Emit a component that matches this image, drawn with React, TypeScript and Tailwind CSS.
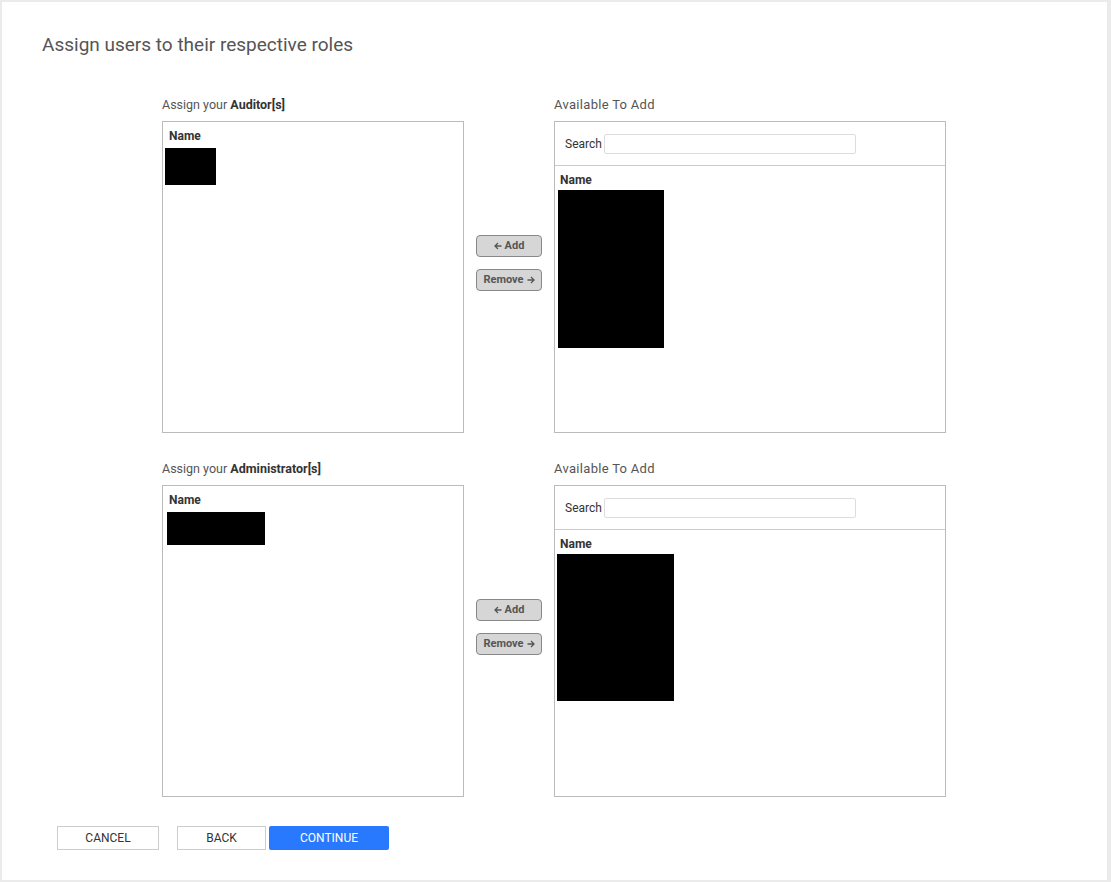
import React from 'react';

interface RoleSectionProps {
  role: string;
  assigned: { left: number; top: number; width: number; height: number };
  available: { left: number; top: number; width: number; height: number };
}

const font = { fontFamily: 'Roboto, "Liberation Sans", sans-serif' };

function Redacted({ left, top, width, height }: { left: number; top: number; width: number; height: number }) {
  // blacked-out user names from the screenshot
  return <div className="bg-black" style={{ marginLeft: left, marginTop: top, width, height }} />;
}

function Arrow({ dir }: { dir: 'left' | 'right' }) {
  return (
    <svg width="8" height="8" viewBox="0 0 8 8" className={dir === 'right' ? 'rotate-180' : ''}>
      <path d="M7.5 4H1M4 1L1 4l3 3" fill="none" stroke="#555" strokeWidth="1.3" />
    </svg>
  );
}

function RoleSection({ role, assigned, available }: RoleSectionProps) {
  return (
    <div className="flex">
      {/* Assigned list */}
      <div className="w-[302px]">
        <p className="h-[25px] pt-[1px] text-[12.5px] leading-[16px] text-[#555]">
          Assign your <span className="font-bold text-[#333]">{role}[s]</span>
        </p>
        <div className="h-[312px] border border-[#bbb]">
          <p className="pl-[6px] pt-[7px] text-[12px] leading-[15px] font-bold text-[#333]">Name</p>
          <Redacted {...assigned} />
        </div>
      </div>

      {/* Move buttons */}
      <div className="ml-[12px] w-[66px] flex flex-col gap-[12px] pt-[139px]">
        <button className="h-[22px] flex items-center justify-center gap-[3px] rounded-[4px] border border-[#888] bg-[#d6d6d6] text-[11px] font-bold text-[#555]">
          <Arrow dir="left" />
          Add
        </button>
        <button className="h-[22px] flex items-center justify-center gap-[3px] rounded-[4px] border border-[#888] bg-[#d6d6d6] text-[11px] font-bold text-[#555]">
          Remove
          <Arrow dir="right" />
        </button>
      </div>

      {/* Available list */}
      <div className="ml-[12px] w-[392px]">
        <p className="h-[25px] pt-[1px] text-[13px] leading-[16px] text-[#555] tracking-[0.3px]">Available To Add</p>
        <div className="h-[312px] border border-[#bbb]">
          <div className="flex items-center h-[44px] pl-[10px] pt-[1px] border-b border-[#ccc]">
            <span className="text-[12px] text-[#333] mr-[2px]">Search</span>
            <input className="w-[252px] h-[20px] border border-[#ddd] rounded-[2px] outline-none" />
          </div>
          <p className="pl-[5px] pt-[7px] text-[12px] leading-[15px] font-bold text-[#333]">Name</p>
          <Redacted {...available} />
        </div>
      </div>
    </div>
  );
}

export default function App() {
  return (
    <div className="w-[1111px] h-[882px] bg-[#ebebeb] pt-[2px] pl-[2px] pr-[4px] pb-[2px]" style={font}>
      <div className="h-full bg-white">
        <h1 className="pl-[40px] pt-[31px] text-[19px] leading-[24px] text-[#555]">
          Assign users to their respective roles
        </h1>

        <div className="ml-[160px] mt-[39px] flex flex-col gap-[27px]">
          <RoleSection
            role="Auditor"
            assigned={{ left: 2, top: 4, width: 51, height: 37 }}
            available={{ left: 3, top: 2, width: 106, height: 158 }}
          />
          <RoleSection
            role="Administrator"
            assigned={{ left: 4, top: 4, width: 98, height: 33 }}
            available={{ left: 2, top: 2, width: 117, height: 147 }}
          />
        </div>

        {/* Footer actions */}
        <div className="flex pl-[55px] mt-[29px]">
          <button className="w-[102px] h-[24px] border border-[#ccc] bg-white text-[12px] text-[#333] uppercase">
            Cancel
          </button>
          <button className="ml-[18px] w-[89px] h-[24px] border border-[#ccc] bg-white text-[12px] text-[#333] uppercase">
            Back
          </button>
          <button className="ml-[3px] w-[120px] h-[24px] rounded-[2px] bg-[#2979ff] text-[12px] text-white uppercase">
            Continue
          </button>
        </div>
      </div>
    </div>
  );
}
